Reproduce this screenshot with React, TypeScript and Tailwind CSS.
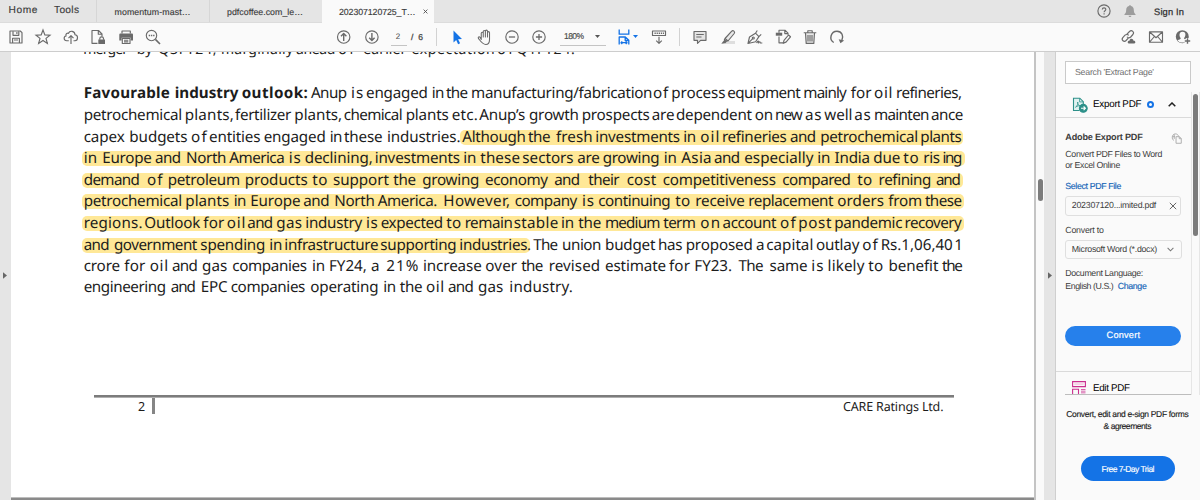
import { ReactNode, useLayoutEffect, useRef, useState } from 'react';

/** Text whose letter spacing is adjusted so that it spans `w` pixels. */
function Fit({ children, w, className = '' }: { children: string; w: number; className?: string }) {
  const ref = useRef<HTMLSpanElement>(null);
  const [ls, setLs] = useState(0);
  useLayoutEffect(() => {
    const el = ref.current;
    if (!el) return;
    el.style.letterSpacing = '0px';
    const natural = el.getBoundingClientRect().width;
    const v = (w - natural) / Math.max(1, children.length - 1);
    el.style.letterSpacing = v + 'px';
    setLs(v);
  }, [children, w]);
  return (
    <span ref={ref} className={`inline-block whitespace-pre ${className}`} style={{ letterSpacing: ls, marginRight: -ls }}>
      {children}
    </span>
  );
}

/** A word with its start and end, in thirds of a pixel from the left margin. */
type Word = [string, number, number];
type Line = { h: string; words: Word[]; mark?: string; bold?: number };

const cut: Word[] = [['merger', 3, 135], ['by', 163, 208], ['Q3FY24,', 228, 398], ['marginally', 416, 630], ['ahead', 641, 755], ['of', 768, 813], ['earlier', 843, 970], ['expectation', 988, 1233], ['of', 1245, 1290], ['Q1FY24.', 1303, 1473]];

const lines: Line[] = [
  { h: 'h-[22px]', bold: 3, words: [['Favourable', 0, 254], ['industry', 273, 462], ['outlook:', 474, 668], ['Anup', 682, 787], ['is', 802, 834], ['engaged', 847, 1028], ['in', 1044, 1078], ['the', 1087, 1150], ['manufacturing/fabrication', 1162, 1702], ['of', 1708, 1751], ['process', 1763, 1921], ['equipment', 1931, 2149], ['mainly', 2159, 2287], ['for', 2301, 2363], ['oil', 2371, 2422], ['refineries,', 2437, 2631]] },
  { h: 'h-[22px]', words: [['petrochemical', 0, 291], ['plants,', 303, 446], ['fertilizer', 454, 622], ['plants,', 632, 771], ['chemical', 780, 954], ['plants', 966, 1091], ['etc.', 1104, 1178], ['Anup’s', 1187, 1322], ['growth', 1336, 1483], ['prospects', 1494, 1694], ['are', 1704, 1768], ['dependent', 1777, 2003], ['on', 2013, 2064], ['new', 2074, 2155], ['as', 2164, 2209], ['well', 2222, 2302], ['as', 2312, 2357], ['mainten', 2371, 2533], ['ance', 2542, 2635]] },
  { h: 'h-[21px]', mark: 'left-[376.500px] w-[502.500px]', words: [['capex', 0, 120], ['budgets', 137, 307], ['of', 322, 367], ['entities', 376, 526], ['engaged', 540, 722], ['in', 738, 772], ['these', 781, 894], ['industries.', 910, 1126], ['Although', 1136, 1324], ['the', 1333, 1398], ['fresh', 1417, 1524], ['investments', 1535, 1785], ['in', 1799, 1833], ['oil', 1850, 1903], ['refineries', 1915, 2105], ['and', 2119, 2193], ['petrochemical', 2210, 2499], ['plants', 2510, 2630]] },
  { h: 'h-[22px]', mark: 'left-[-2px] w-[883px]', words: [['in', 0, 36], ['Europe', 56, 200], ['and', 214, 288], ['North', 307, 424], ['America', 437, 600], ['is', 615, 647], ['declining,', 663, 863], ['investments', 873, 1125], ['in', 1139, 1174], ['these', 1190, 1306], ['sectors', 1316, 1467], ['are', 1481, 1544], ['growing', 1557, 1725], ['in', 1740, 1775], ['Asia', 1793, 1881], ['and', 1891, 1965], ['especially', 1982, 2187], ['in', 2201, 2236], ['India', 2253, 2355], ['due', 2369, 2446], ['to', 2459, 2502], ['ris', 2519, 2565], ['ing', 2577, 2632]] },
  { h: 'h-[21px]', mark: 'left-[-2px] w-[881px]', words: [['demand', 0, 164], ['of', 190, 234], ['petroleum', 252, 465], ['products', 483, 668], ['to', 686, 728], ['support', 748, 915], ['the', 929, 994], ['growing', 1016, 1184], ['economy', 1204, 1391], ['and', 1412, 1485], ['their', 1514, 1607], ['cost', 1629, 1717], ['competitiveness', 1737, 2074], ['compared', 2096, 2299], ['to', 2321, 2363], ['refining', 2385, 2539], ['and', 2557, 2627]] },
  { h: 'h-[22px]', mark: 'left-[-2px] w-[882px]', words: [['petrochemical', 0, 291], ['plants', 305, 432], ['in', 450, 484], ['Europe', 500, 646], ['and', 659, 733], ['North', 752, 869], ['America.', 882, 1058], ['However,', 1079, 1275], ['company', 1293, 1480], ['is', 1495, 1527], ['continuing', 1544, 1758], ['to', 1775, 1817], ['receive', 1835, 1979], ['replacement', 1994, 2247], ['orders', 2261, 2397], ['from', 2414, 2513], ['these', 2524, 2632]] },
  { h: 'h-[22px]', mark: 'left-[-2px] w-[882px]', words: [['regions.', 0, 172], ['Outlook', 182, 348], ['for', 359, 421], ['oil', 429, 481], ['and', 491, 564], ['gas', 578, 652], ['industry', 665, 833], ['is', 847, 878], ['expected', 891, 1074], ['to', 1088, 1130], ['remain', 1143, 1283], ['stable', 1290, 1421], ['in', 1432, 1467], ['the', 1484, 1550], ['medium', 1564, 1726], ['term', 1739, 1834], ['on', 1850, 1905], ['account', 1917, 2076], ['of', 2089, 2134], ['post', 2144, 2241], ['pandemic', 2252, 2452], ['recovery', 2463, 2632]] },
  { h: 'h-[21px]', mark: 'left-[-2px] w-[448px]', words: [['and', 0, 73], ['government', 91, 340], ['spending', 350, 542], ['in', 557, 592], ['infrastructure', 602, 880], ['supporting', 890, 1116], ['industries.', 1127, 1338], ['The', 1349, 1420], ['union', 1435, 1549], ['budget', 1564, 1713], ['has', 1723, 1792], ['proposed', 1806, 2003], ['a', 2017, 2039], ['capital', 2048, 2186], ['outlay', 2197, 2325], ['of', 2336, 2380], ['Rs.1,06,40', 2391, 2603], ['1', 2612, 2633]] },
  { h: 'h-[21px]', words: [['crore', 0, 106], ['for', 122, 184], ['oil', 198, 249], ['and', 265, 338], ['gas', 355, 428], ['companies', 446, 667], ['in', 685, 720], ['FY24,', 736, 845], ['a', 862, 885], ['21%', 908, 1000], ['increase', 1018, 1190], ['over', 1205, 1298], ['the', 1313, 1376], ['revised', 1395, 1545], ['estimate', 1564, 1743], ['for', 1756, 1818], ['FY23.', 1832, 1941], ['The', 1965, 2037], ['same', 2058, 2169], ['is', 2183, 2215], ['likely', 2232, 2340], ['to', 2354, 2396], ['benefit', 2415, 2562], ['the', 2575, 2635]] },
  { h: 'h-[22px]', words: [['engineering', 0, 243], ['and', 261, 332], ['EPC', 351, 427], ['companies', 441, 662], ['operating', 680, 880], ['in', 899, 933], ['the', 948, 1014], ['oil', 1027, 1077], ['and', 1093, 1166], ['gas', 1183, 1256], ['industry.', 1277, 1463]] },
];

/** Side bearings, in pixels, of the first and last glyph of a word. */
const bearings = (t: string) => (/^[tfATycsg]/.test(t) ? 0.3 : 0.8) + (/[rftyvwk]$/.test(t) ? 0 : 0.7);

function Words({ words, bold = 0 }: { words: Word[]; bold?: number }) {
  return (
    <>
      {words.map(([t, a, b], i) => {
        const next = i + 1 < words.length ? words[i + 1][1] : b + 6;
        return (
          <span key={i} className={`block shrink-0 ${i < bold ? 'font-bold' : ''}`} style={{ width: (next - a) / 3 }}>
            <Fit w={(b - a) / 3 + bearings(t)}>{t}</Fit>
          </span>
        );
      })}
    </>
  );
}

function Icon({ children, className = '' }: { children: ReactNode; className?: string }) {
  return (
    <svg viewBox="0 0 16 16" className={`size-4 shrink-0 overflow-visible ${className}`} fill="none" stroke="#6a6a6a" strokeWidth="1.15" strokeLinejoin="round">
      {children}
    </svg>
  );
}

function TabBar() {
  return (
    <div className="flex h-[23px] shrink-0 border-b border-[#dcdcdc] bg-[#e5e5e5] text-[#3c3c3c]">
      <div className="flex w-[97px] shrink-0 border-r border-[#d6d6d6] pl-[8.500px] text-[10.200px] leading-[22px] [-webkit-text-stroke:0.15px]">
        <Fit w={29}>Home</Fit>
        <span className="w-[16.500px]" />
        <Fit w={25}>Tools</Fit>
      </div>
      <div className="w-[113px] shrink-0 border-r border-[#d6d6d6] pl-[17.5px] text-[8.8px] leading-[24px] [-webkit-text-stroke:0.15px]"><Fit w={76}>momentum-mast…</Fit></div>
      <div className="w-[112px] shrink-0 pl-[17px] text-[8.8px] leading-[24px] [-webkit-text-stroke:0.15px]"><Fit w={76}>pdfcoffee.com_le…</Fit></div>
      <div className="flex h-[23px] w-[112px] shrink-0 items-center bg-[#fafafa] pl-[17px] text-[8.8px] leading-[24px] [-webkit-text-stroke:0.15px]">
        <Fit w={76.5}>202307120725_T…</Fit>
        <svg viewBox="0 0 6 6" className="ml-[8px] size-[5px]" stroke="#444" strokeWidth="1"><path d="M.7.7l4.6 4.6M5.3.7L.7 5.3" /></svg>
      </div>
      <div className="flex-1" />
      <div className="flex w-[103px] shrink-0 items-start pt-[2.5px]">
        <Icon>
          <circle cx="7" cy="8" r="6.1" />
          <path d="M5.3 6.6c0-2.2 3.5-2.2 3.5-.1C8.800 7.700 7.100 7.700 7.100 9.200M7.100 10.200v1.200" />
        </Icon>
        <Icon className="ml-[10px]">
          <path d="M7 2.2c.7 0 1 .4 1 .9 2 .5 2.700 2 2.800 4 .1 2.300.6 3.300 1.800 4.400v.6H1.400v-.6c1.200-1.100 1.700-2.100 1.800-4.400.1-2 .8-3.500 2.800-4 0-.5.3-.9 1-.9zM5.600 12.800h2.800c0 1.600-2.800 1.600-2.800 0z" fill="#9c9c9c" stroke="none" />
        </Icon>
        <span className="ml-[15px] text-[9.3px] leading-[19px] text-[#2f2f2f] [-webkit-text-stroke:0.25px]"><Fit w={30}>Sign In</Fit></span>
      </div>
    </div>
  );
}

function Toolbar() {
  return (
    <div className="flex h-[29px] shrink-0 items-center border-b border-[#cdcdcd] bg-[#fafafa] pb-[1px] text-[8.5px] text-[#4a4a4a]">
      <div className="flex w-[336px] shrink-0 gap-[11.5px] pl-[7.500px]">
        <Icon>
          <path d="M2 2h10.300L14 3.700V14H2z" /><path d="M5 2.300v4h5.800v-4M8.900 3v2M4.600 14V9.200h6.800V14M6 11h4" />
        </Icon>
        <Icon><path d="M8 1l1.850 4.900 5.150.250-4 3.250 1.350 5L8 11.550 3.650 14.400 5 9.400 1 6.150 6.150 5.900z" strokeLinejoin="miter" /></Icon>
        <Icon>
          <path d="M5.800 11.700H3.700C.500 11.500.400 7.500 3 7 2.300 4.600 4.700 3.700 5.500 4.300 6.800 1.100 11.900 1.800 12 5.700c3.400.100 3.300 5.900 0 6h-1.500M8 15V7M5.500 9.200L8 6.700l2.500 2.500" />
        </Icon>
        <Icon>
          <path d="M7.500 14.300H2V1.500h6.500l3.500 3.500v2.500M8.300 1.700V5.200H12" />
          <path d="M8.300 10.500h6.700V15H8.300z" fill="#6a6a6a" stroke="none" /><path d="M9.800 10.700V9.500c0-2.200 3.700-2.200 3.700 0v1.200" />
        </Icon>
        <Icon>
          <path d="M4 4.500V2h8.300v2.500M4.300 9.500h7.700v5H4.300zM6 11.200h4.300M6 12.900h4.300" />
          <path d="M2.500 4.500h11.300c.7 0 1.200.5 1.200 1.200v5.800h-2.300V8.700H3.600v2.800H1.300V5.700c0-.7.5-1.200 1.200-1.200z" fill="#6a6a6a" stroke="none" />
        </Icon>
        <Icon><circle cx="6.500" cy="6.500" r="5.200" /><path d="M10.400 10.400L15 15" strokeWidth="1.6" /><path d="M3.700 6.500h1.400M5.900 6.500h1.400M8.100 6.500h1.400" strokeWidth="1.400" /></Icon>
      </div>
      <div className="flex shrink-0 items-center">
        <Icon><circle cx="7.700" cy="8" r="6.200" /><path d="M7.700 12V4.500M5 7.200l2.700-2.700 2.700 2.700" strokeWidth="1.400" /></Icon>
        <Icon className="ml-[11.500px]"><circle cx="7.900" cy="8" r="6.200" /><path d="M7.900 4v7.500M5.200 8.800l2.700 2.700 2.700-2.700" strokeWidth="1.400" /></Icon>
        <span className="mt-[2px] ml-[11.5px] h-[17px] w-[16px] border-b border-[#c4c4c4] pr-[2px] text-center text-[8px] leading-[16px]">2</span>
        <span className="ml-[4px] w-[25px] text-[8.5px] leading-[16px] [-webkit-text-stroke:0.3px]"><Fit w={12}>/ 6</Fit></span>
        <span className="h-[18px] w-px bg-[#d2d2d2]" />
        <Icon className="ml-[11.5px]"><path d="M4.500 1.500v12l2.700-2.500 1.900 4.200 2-.9-2-4.100 3.900-.3z" fill="#1473e6" stroke="none" /></Icon>
        <Icon className="ml-[12px]">
          <path d="M4.200 10.300V4.500c0-1.400 1.900-1.400 1.900 0V8 2.800c0-1.400 2-1.400 2 0V8 2.500c0-1.400 2-1.400 2 0V8 3.900c0-1.400 1.900-1.400 1.900 0v6.400C12 13.300 10.800 15 8.500 15 5.500 15 4.300 13 1.500 9.200.9 7.900 2.300 7.300 3.100 8.200z" transform="translate(-.2 -.4) scale(1.06)" strokeWidth="1" />
        </Icon>
        <Icon className="ml-[11px]"><circle cx="8" cy="8" r="6.200" /><path d="M4.900 8h6.200" strokeWidth="1.300" /></Icon>
        <Icon className="ml-[11.5px]"><circle cx="8" cy="8" r="6.200" /><path d="M4.900 8h6.200M8 4.900v6.200" strokeWidth="1.300" /></Icon>
        <span className="mt-[2px] ml-[12.500px] flex h-[17px] w-[46px] items-center border-b border-[#c4c4c4] pb-[2px] pl-[4.500px] [-webkit-text-stroke:0.15px]">
          <Fit w={20}>180%</Fit>
          <svg viewBox="0 0 5 3" className="ml-[11px] h-[3px] w-[5px]"><path d="M0 0h5L2.500 3z" fill="#555" /></svg>
        </span>
        <Icon className="ml-[10px]">
          <path d="M3.200.500V5.200h9.600V.500M3.200 15.500V8h6.100l3.500 3.300v4.200M9.200 8.200v3.300h3.500M5 13.700h6M6.300 12.500L5 13.700l1.300 1.200M9.700 12.500l1.300 1.200-1.300 1.200" stroke="#1473e6" strokeWidth="1.300" />
        </Icon>
        <svg viewBox="0 0 5 3" className="ml-[1px] h-[3px] w-[5px]"><path d="M0 0h5L2.500 3z" fill="#1473e6" /></svg>
        <Icon className="ml-[13px]">
          <path d="M1.500 2h13v4.500h-13z" /><path d="M3.500 4.200h9.500" strokeDasharray="1.300 .8" strokeWidth="1.500" /><path d="M8 7.700v6.600M5.200 11.700L8 14.400l2.800-2.700" />
        </Icon>
        <span className="ml-[12px] h-[18px] w-px bg-[#d2d2d2]" />
        <Icon className="ml-[12.5px]">
          <path d="M2 2.500h12v8.800H8.600L5.500 14.300v-3H2z" fill="#e4e4e4" /><path d="M4.300 5.500h7.500M4.300 8h5.200" />
        </Icon>
        <Icon className="ml-[11.500px]">
          <path d="M6.500 12h8.500v3H5z" fill="#dedede" stroke="none" /><path d="M5 9.500L11.500 2.300c1.600-1.500 4 .3 2.700 2.200L8 12H5.200L4.400 10.700zM5 9.500l3 2.400" fill="#e8e8e8" /><path d="M4.600 10.500L1.300 14.700l4.200-.5 1.500-2z" fill="#6a6a6a" stroke="none" />
        </Icon>
        <Icon className="ml-[11.500px]">
          <path d="M1 14.500L2.500 8 8.500 4.200l3.400 3.400-3.300 5.200zM1.300 14.200l4.200-4.400M8.500 4.200L10.300 1.500M11.900 7.600l2.300-2.300" /><circle cx="6.300" cy="9" r="1" /><path d="M9.500 14c1.500-2.500 2.500-2.500 1.800 0 1.500-1.700 2-1.500 2 0h2" />
        </Icon>
        <Icon className="ml-[11.500px]">
          <path d="M4 3.800V1.200h6l3 3v1.500M9.800 1.400v3.200h3.100M4 7.500v6.300h4" /><path d="M.800 3.700h6.400v3H.800z" fill="#6a6a6a" stroke="none" /><path d="M8.300 14.300l.7-3L13.500 6l2 1.800L11 13.100z" fill="#fafafa" />
        </Icon>
        <Icon className="ml-[11.500px]">
          <path d="M3.500 4l.7 10.400h7.600L12.500 4" fill="#e8e8e8" /><path d="M1.700 3.700h12.600M5.800 3.500V1.700h4.400v1.800M6 6v6.500M8 6v6.500M10 6v6.500" />
        </Icon>
        <Icon className="ml-[11px]"><path d="M4.700 13.500C-.300 10.700 1.700 2.200 8 2.200c4.900 0 7 5 4.800 9.300" strokeWidth="1.400" /><path d="M9.700 10.200l5.500 1.200-3.800 2.900z" fill="#6a6a6a" stroke="none" /></Icon>
      </div>
      <div className="flex-1" />
      <div className="flex w-[80px] shrink-0 gap-[11.5px]">
        <Icon>
          <path d="M6.500 5.700l3-3.200c2.300-2 5.300.7 3.400 3L10.700 8c-1.300 1.200-3 .9-3.700-.2M8.500 8.800L6.100 11.500C4 13.500.900 11 2.800 8.600L5 6.200c1.200-1.100 2.800-.9 3.700.2" />
          <path d="M9.300 14.500c-2.300 0-2-3 .2-2.800.4-2.700 3.600-2.500 4 0 2.400-.2 2.500 2.800.3 2.800z" fill="#6a6a6a" stroke="none" />
        </Icon>
        <Icon><path d="M1.500 2.800h13v10.400h-13zM1.700 3l6.300 5.700L14.300 3M1.700 13l4.700-5.500M14.300 13L9.600 7.500" /></Icon>
        <Icon>
          <circle cx="7.300" cy="7.700" r="6.500" fill="#6a6a6a" stroke="none" />
          <path d="M7.500 2.800c4.300 0 3 5 1.500 6.300.1 1.500 2 1.500 3.100 2.300-2.400 2.900-7 2.900-9.500 0C3.800 10.600 5.700 10.600 5.800 9.100 4.200 7.800 3.500 2.800 7.500 2.800z" fill="#fafafa" stroke="none" />
          <path d="M12.500 9v6M9.500 12h6" stroke="#fafafa" strokeWidth="3.500" /><path d="M12.500 9.300v5.400M9.800 12h5.400" strokeWidth="1.400" />
        </Icon>
      </div>
    </div>
  );
}

function Page() {
  return (
    <div className="flex w-[1025px] shrink-0 flex-col border-r-2 border-[#c4c4c4] bg-white font-['Noto_Sans','Open_Sans',sans-serif] text-[15.2px] leading-[22px] text-[#1c1c1c]">
      <div className="h-[30px] shrink-0 overflow-hidden pl-[72.3px]">
        <div className="mt-[-13px] flex text-[14px]"><Words words={cut} /></div>
      </div>
      <div className="shrink-0 pl-[72.7px]">
        {lines.map((l, i) => (
          <div key={i} className={`relative flex shrink-0 ${l.h}`}>
            {l.mark && <div className={`absolute top-[4px] h-[15px] rounded-[5px] bg-[#ffe897] ${l.mark}`} />}
            <div className="relative flex"><Words words={l.words} bold={l.bold} /></div>
          </div>
        ))}
      </div>
      <div className="mt-[97px] ml-[83px] w-[860px] shrink-0">
        <div className="h-[3px] border-b border-[#b0b0b0] bg-[#7c7c7c]" />
        <div className="flex h-[17px] text-[12.5px] leading-[17px]">
          <span className="w-[58px] pl-[44px]">2</span>
          <span className="h-[16px] w-[3px] bg-[#858585]" />
          <span className="flex-1" />
          <span className="mr-[11px] block w-[100px]"><Fit w={100.500}>CARE Ratings Ltd.</Fit></span>
        </div>
      </div>
      <div className="flex-1" />
      <div className="h-[3px] shrink-0 border-t border-[#bdbdbd] bg-[#8a8a8a]" />
    </div>
  );
}

function Sidebar() {
  return (
    <div className="flex min-w-0 flex-1 flex-col bg-[#fafafa] text-[8.800px] text-[#3d3d3d]">
      <div className="mt-[9px] ml-[9px] h-[23px] w-[126px] shrink-0 border border-[#cacaca] bg-white pl-[9px] leading-[21px] text-[#707070]"><Fit w={79}>Search 'Extract Page'</Fit></div>
      <div className="mt-[8px] flex h-[303px] shrink-0 overflow-hidden">
        <div className="flex w-[135px] shrink-0 flex-col">
          <div className="flex h-[26px] shrink-0 items-center border-b border-[#dadada] pl-[16px]">
            <svg viewBox="0 0 16 16" className="size-[16px]" fill="none" stroke="#2d9089" strokeWidth="1.100">
              <path d="M7.500 13.500H1.500V1.200h6.300l3.500 3.500V7.500" fill="#dff1f0" /><path d="M7.600 1.400v3.500h3.500M3.500 10.200C5.500 9 6.300 6.500 5.700 5c-.8 2 1.500 4.300 3.500 3.700-2-.3-4 .3-5.700 1.500z" strokeWidth=".8" />
              <circle cx="11.300" cy="11.300" r="3.900" fill="#2d9089" /><path d="M9 11.300h4.300M11.600 9.500l1.800 1.800-1.800 1.800" stroke="white" />
            </svg>
            <span className="ml-[5px] pt-[1.500px] text-[9.800px] text-black"><Fit w={48.500}>Export PDF</Fit></span>
            <span className="ml-[5px] size-[7px] rounded-full border-2 border-[#1473e6]" />
            <svg viewBox="0 0 8 5" className="ml-[14px] h-[5px] w-[8px]" fill="none" stroke="#222" strokeWidth="1.500"><path d="M.7 4.300L4 1l3.300 3.300" /></svg>
          </div>
          <div className="flex h-[254px] shrink-0 flex-col border-b border-[#dadada] pl-[9.300px]">
            <div className="mt-[13px] flex h-[14px] items-center justify-between pr-[9px] text-[9.100px] font-bold">
              <Fit w={77.500}>Adobe Export PDF</Fit>
              <svg viewBox="0 0 12 12" className="size-[11px]" fill="none" stroke="#aaa" strokeWidth="1"><path d="M3 8C.5 7 .8 1.200 4.500 1 6.500.800 8 2 8 3.500M3.500 1.500v5M1.500 4h3M5.500 4h3.700l2 2v5.200H5.500z" /><path d="M9 4v2.200h2" /></svg>
            </div>
            <div className="mt-[4px] h-[11px] leading-[11px]"><Fit w={97}>Convert PDF Files to Word</Fit></div>
            <div className="h-[10px] leading-[11px]"><Fit w={55}>or Excel Online</Fit></div>
            <div className="mt-[11px] h-[11px] leading-[11px] text-[#1364b8] [-webkit-text-stroke:0.15px]"><Fit w={56}>Select PDF File</Fit></div>
            <div className="mt-[4px] flex h-[20px] w-[116px] items-center rounded-[3px] border border-[#dfdfdf] pl-[5.500px]">
              <Fit w={84.500}>202307120...imited.pdf</Fit>
              <svg viewBox="0 0 8 8" className="ml-[12.500px] size-[8px]" stroke="#666" strokeWidth="1"><path d="M.8.8l6.400 6.400M7.200.8L.8 7.200" /></svg>
            </div>
            <div className="mt-[9px] h-[11px] leading-[11px]"><Fit w={38.500}>Convert to</Fit></div>
            <div className="mt-[4px] flex h-[19px] w-[117px] items-center rounded-[3px] border border-[#dfdfdf] pl-[5.500px]">
              <Fit w={85.500}>Microsoft Word (*.docx)</Fit>
              <svg viewBox="0 0 8 5" className="ml-[10px] h-[5px] w-[7px]" fill="none" stroke="#777" strokeWidth="1.200"><path d="M.7.700L4 4l3.300-3.300" /></svg>
            </div>
            <div className="mt-[9px] h-[11px] leading-[11px]"><Fit w={78}>Document Language:</Fit></div>
            <div className="mt-[1.500px] flex h-[11px] leading-[11px]">
              <Fit w={48.500}>English (U.S.)</Fit>
              <span className="ml-[4px] text-[#1364b8] [-webkit-text-stroke:0.15px]"><Fit w={29}>Change</Fit></span>
            </div>
            <div className="mt-[34px] flex h-[20px] w-[116px] items-center justify-center rounded-full bg-[#2680eb] pt-[1px] text-[9.200px] text-white [-webkit-text-stroke:0.2px]"><Fit w={33.500}>Convert</Fit></div>
          </div>
          <div className="ml-[9px] flex h-[23px] shrink-0 items-start overflow-hidden border-b border-[#bdbdbd] pl-[7px]">
            <svg viewBox="0 0 14 14" className="mt-[9px] size-[14px] shrink-0" fill="none" stroke="#cb2f8f" strokeWidth="1.100">
              <path d="M.6.600h12.800v5H.6z" /><path d="M2.300 2.200h9.400v1.800H2.300z" fill="#f6cfe4" stroke="none" /><path d="M.6 8.200h5.900v5.500H.6zM9 8.700h4.500M9 11h4.500M9 13.200h4.500" />
            </svg>
            <span className="ml-[7px] text-[9.800px] leading-[33px] text-black"><Fit w={37}>Edit PDF</Fit></span>
          </div>
        </div>
        <div className="flex w-[9px] shrink-0 justify-center border-x border-[#e6e6e6] pt-[2px]">
          <div className="h-[142px] w-[5px] rounded-full bg-[#7c7c7c]" />
        </div>
      </div>
      <div className="mt-[12.500px] flex flex-col items-center leading-[12px] text-[#222] [-webkit-text-stroke:0.15px]">
        <div className="-ml-[1px] text-[8.500px]"><Fit w={122.500}>Convert, edit and e-sign PDF forms</Fit></div>
        <div className="-ml-[1px] text-[8.500px]"><Fit w={48}>&amp; agreements</Fit></div>
        <div className="mt-[24.500px] flex h-[25px] w-[94px] items-center justify-center rounded-full bg-[#1473e6] text-[8.500px] text-white"><Fit w={53}>Free 7-Day Trial</Fit></div>
      </div>
    </div>
  );
}

export default function App() {
  return (
    <div className="flex h-[500px] w-[1200px] flex-col overflow-hidden bg-white font-['Liberation_Sans',Arial,sans-serif] [text-rendering:geometricPrecision]">
      <TabBar />
      <Toolbar />
      <div className="flex min-h-0 flex-1">
        <div className="flex w-[11px] shrink-0 items-start bg-[#e5e5e5] pt-[220px] pl-[3px]">
          <svg viewBox="0 0 5 8" className="h-[7px] w-[4px]"><path d="M0 0v8l5-4z" fill="#666" /></svg>
        </div>
        <Page />
        <div className="flex w-[8px] shrink-0 justify-center bg-[#fafafa] pt-[127px]">
          <div className="h-[22px] w-[5px] rounded-full bg-[#7c7c7c]" />
        </div>
        <div className="flex w-[12px] shrink-0 items-start border-r border-[#cfcfcf] bg-[#e5e5e5] pt-[220px] pl-[4px]">
          <svg viewBox="0 0 5 8" className="h-[7px] w-[4px]"><path d="M0 0v8l5-4z" fill="#666" /></svg>
        </div>
        <Sidebar />
      </div>
    </div>
  );
}
